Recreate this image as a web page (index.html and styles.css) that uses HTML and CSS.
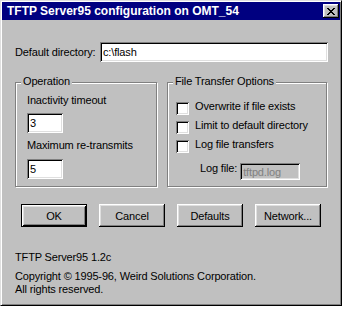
FILE: index.html
```html
<!DOCTYPE html>
<html>
<head>
<meta charset="utf-8">
<link rel="stylesheet" href="styles.css">
</head>
<body>
<div class="window">
  <div class="titlebar">
    <span class="title">TFTP Server95 configuration on OMT_54</span>
    <button class="close" aria-label="Close">
      <svg width="8" height="7" viewBox="0 0 8 7" shape-rendering="crispEdges"><path fill="#000" d="M0 0h2v1H0zM6 0h2v1H6zM1 1h2v1H1zM5 1h2v1H5zM2 2h4v1H2zM3 3h2v1H3zM2 4h4v1H2zM1 5h2v1H1zM5 5h2v1H5zM0 6h2v1H0zM6 6h2v1H6z"/></svg>
    </button>
  </div>
  <div class="client">
    <div class="dir-row">
      <span class="dir-label">Default directory:</span>
      <div class="edit dir-edit">c:\flash</div>
    </div>
    <div class="groups">
      <div class="group op">
        <span class="legend">Operation</span>
        <div class="field-label">Inactivity timeout</div>
        <div class="edit small">3</div>
        <div class="field-label second">Maximum re-transmits</div>
        <div class="edit small last">5</div>
      </div>
      <div class="group fto">
        <span class="legend">File Transfer Options</span>
        <div class="check"><span class="box"></span><span>Overwrite if file exists</span></div>
        <div class="check"><span class="box"></span><span>Limit to default directory</span></div>
        <div class="check"><span class="box"></span><span>Log file transfers</span></div>
        <div class="logrow"><span>Log file:</span><div class="edit disabled">tftpd.log</div></div>
      </div>
    </div>
    <div class="buttons">
      <button class="btn default">OK</button>
      <button class="btn">Cancel</button>
      <button class="btn">Defaults</button>
      <button class="btn">Network...</button>
    </div>
    <div class="footer">
      <div class="version">TFTP Server95 1.2c</div>
      <div class="copy">Copyright © 1995-96, Weird Solutions Corporation.<br>All rights reserved.</div>
    </div>
  </div>
</div>
</body>
</html>
```

FILE: styles.css
```css
html, body {
  margin: 0;
  padding: 0;
  background: #ffffff;
}
body {
  font-family: "Liberation Sans", Arial, sans-serif;
  font-size: 11px;
  line-height: 13px;
  letter-spacing: -0.15px;
  color: #000;
}
.window {
  box-sizing: border-box;
  width: 342px;
  height: 306px;
  background: #c0c0c0;
  border: 1px solid;
  border-color: #dfdfdf #000 #000 #dfdfdf;
  box-shadow: inset 1px 1px #fff, inset -1px -1px #808080;
  padding: 1px;
}
.titlebar {
  height: 18px;
  background: #000080;
  display: flex;
  align-items: center;
  padding: 0 1px 0 5px;
}
.title {
  color: #fff;
  font-weight: bold;
  font-size: 12px;
  line-height: 14px;
  letter-spacing: 0;
  white-space: nowrap;
}
.close {
  margin-left: auto;
  width: 16px;
  height: 14px;
  padding: 0;
  border: none;
  background: #c0c0c0;
  box-shadow: inset -1px -1px #000, inset 1px 1px #fff, inset -2px -2px #808080, inset 2px 2px #dfdfdf;
  display: flex;
  align-items: center;
  justify-content: center;
}
.close svg { display: block; margin-left: -1px; }
.client {
  padding: 0 12px 0 13px;
}
.dir-row {
  margin-top: 22px;
  display: flex;
  align-items: flex-start;
}
.dir-label {
  padding-top: 4px;
}
.edit {
  box-sizing: border-box;
  height: 20px;
  background: #fff;
  box-shadow: inset 1px 1px #808080, inset -1px -1px #fff, inset 2px 2px #000, inset -2px -2px #dfdfdf;
  padding: 3px 3px 0 3px;
  line-height: 14px;
  white-space: nowrap;
}
.dir-edit {
  margin-left: auto;
  width: 228px;
}
.groups {
  margin-top: 20px;
  display: flex;
  gap: 10px;
}
.group {
  position: relative;
  box-sizing: border-box;
  height: 105px;
  border: 1px solid #808080;
  box-shadow: inset 1px 1px #fff, 1px 1px #fff;
}
.op {
  width: 142px;
  padding: 11px 0 0 11px;
}
.fto {
  width: 160px;
  padding: 17px 0 0 8px;
}
.legend {
  position: absolute;
  top: -8px;
  left: 5px;
  padding: 0 2px;
  background: #c0c0c0;
  white-space: nowrap;
}
.field-label { white-space: nowrap; }
.field-label.second { margin-top: 6px; }
.edit.small {
  width: 36px;
  margin-top: 6px;
}
.edit.small.last { margin-top: 7px; }
.check {
  display: flex;
  align-items: flex-start;
  gap: 6px;
  height: 13px;
  white-space: nowrap;
  margin-bottom: 6px;
}
.box {
  flex: none;
  width: 13px;
  height: 13px;
  margin-top: 2px;
  box-sizing: border-box;
  background: #fff;
  box-shadow: inset 1px 1px #808080, inset -1px -1px #fff, inset 2px 2px #000, inset -2px -2px #dfdfdf;
}
.logrow {
  margin-top: 11px;
  display: flex;
  align-items: flex-start;
  gap: 3px;
  padding-left: 24px;
}
.edit.disabled {
  width: 60px;
  height: 17px;
  margin-top: 1px;
  padding-top: 2px;
  background: #c0c0c0;
  color: #808080;
}
.buttons {
  margin-top: 17px;
  padding-left: 6px;
  display: flex;
  gap: 12px;
}
.btn {
  width: 66px;
  height: 23px;
  padding: 0;
  border: none;
  background: #c0c0c0;
  font-family: "Liberation Sans", Arial, sans-serif;
  font-size: 11px;
  letter-spacing: -0.15px;
  color: #000;
  box-shadow: inset -1px -1px #000, inset 1px 1px #fff, inset -2px -2px #808080, inset 2px 2px #dfdfdf;
}
.btn.default {
  box-shadow: inset 1px 1px #000, inset -1px -1px #000, inset 2px 2px #fff, inset -2px -2px #000, inset 3px 3px #dfdfdf, inset -3px -3px #808080;
}
.footer {
  margin-top: 24px;
}
.copy {
  margin-top: 6px;
}
```
